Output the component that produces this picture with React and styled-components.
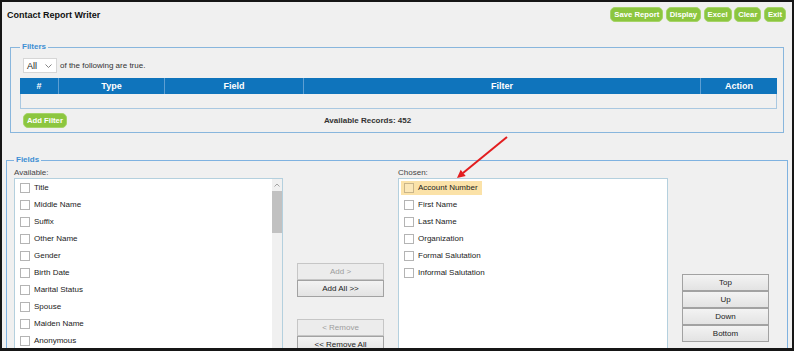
import React from "react";
import styled, { createGlobalStyle } from "styled-components";

const Global = createGlobalStyle`
  html, body { margin: 0; padding: 0; background: #ffffff; }
  body { font-family: "Liberation Sans", Arial, sans-serif; color: #222; }
`;

const Frame = styled.div`
  position: relative;
  width: 794px;
  height: 351px;
  box-sizing: border-box;
  border: 2px solid #161616;
  border-bottom-width: 3px;
  background: #f0f0f0;
  overflow: hidden;
`;

const Header = styled.div`
  display: flex;
  align-items: center;
  justify-content: space-between;
  height: 25px;
  padding: 0 6px 0 5px;
`;

const Title = styled.div`
  font-size: 9px;
  font-weight: bold;
  color: #111;
`;

const ActionBar = styled.div`
  display: flex;
  gap: 2.5px;
`;

const GreenButton = styled.button`
  height: 15px;
  padding: 0 3px;
  margin: ${(p) => p.$margin || "0"};
  border: 1px solid #a6d468;
  border-radius: 5px;
  background: #8cc63f;
  color: #fff;
  font-family: "Liberation Sans", Arial, sans-serif;
  font-weight: bold;
  font-size: 7.7px;
  line-height: 13px;
  white-space: nowrap;
`;

const Fieldset = styled.fieldset`
  margin: ${(p) => p.$margin};
  padding: ${(p) => p.$padding};
  border: 1px solid ${(p) => p.$border};
  min-width: 0;
`;

const Legend = styled.legend`
  padding: 0 2px;
  margin: 0;
  font-size: 8px;
  line-height: 10px;
  font-weight: bold;
  color: #3d8ed3;
`;

const MatchRow = styled.div`
  display: flex;
  align-items: center;
  height: 15px;
  margin-left: 3px;
  gap: 3px;
  font-size: 8px;
  color: #333;
`;

const SelectBox = styled.div`
  display: flex;
  align-items: center;
  justify-content: space-between;
  box-sizing: border-box;
  width: 34px;
  height: 15px;
  padding: 0 4px 0 3px;
  background: #fff;
  border: 1px solid #d6d6d6;
  font-size: 9px;
  color: #222;
`;

const Table = styled.div`
  margin-top: 5px;
`;

const HeadRow = styled.div`
  display: grid;
  grid-template-columns: 38px 106px 139px 397px 1fr;
  height: 16px;
  background: #0f74bc;
`;

const HeadCell = styled.div`
  display: flex;
  align-items: center;
  justify-content: center;
  color: #fff;
  font-size: 9px;
  font-weight: bold;
  border-left: ${(p) => (p.$first ? "none" : "1px solid #5d9fd3")};
`;

const BodyRow = styled.div`
  height: 15px;
  box-sizing: border-box;
  border: 1px solid #a9c8e1;
  border-top: none;
`;

const FilterFooter = styled.div`
  display: flex;
  align-items: center;
  margin-top: 4px;
  height: 15px;
`;

const Records = styled.div`
  margin-left: 257px;
  font-size: 8px;
  font-weight: bold;
  color: #333;
`;

const FieldsGrid = styled.div`
  display: grid;
  grid-template-columns: 269px 87px 270px 87px;
  column-gap: 14px;
  align-items: start;
`;

const ListColumn = styled.div`
  display: flex;
  flex-direction: column;
`;

const ListLabel = styled.div`
  height: 10px;
  line-height: 10px;
  font-size: 8px;
  color: #444;
`;

const ListBox = styled.div`
  display: flex;
  height: 190px;
  box-sizing: border-box;
  background: #fff;
  border: 1px solid #b4d0de;
`;

const List = styled.div`
  flex: 1;
  padding-left: 2px;
`;

const Row = styled.div`
  display: flex;
  align-items: center;
  height: 17px;
`;

const Item = styled.div`
  display: inline-flex;
  align-items: center;
  gap: 4px;
  height: 14px;
  padding: 0 4px 0 3px;
  background: ${(p) => (p.$selected ? "#fbe2a8" : "transparent")};
  font-size: 8px;
  color: #222;
`;

const Check = styled.span`
  width: 8px;
  height: 8px;
  border: 1px solid ${(p) => (p.$selected ? "#c9b58a" : "#b4b4b4")};
  background: ${(p) => (p.$selected ? "#fbe7b8" : "#fff")};
`;

const Scrollbar = styled.div`
  display: flex;
  flex-direction: column;
  width: 10px;
  background: #f0f0f0;
`;

const ScrollArrow = styled.div`
  display: flex;
  align-items: center;
  justify-content: center;
  height: 12px;
`;

const Thumb = styled.div`
  height: 42px;
  background: #c1c1c1;
`;

const ButtonStack = styled.div`
  display: flex;
  flex-direction: column;
  padding-top: ${(p) => p.$top}px;
`;

const GrayButton = styled.button`
  height: 17px;
  margin-top: ${(p) => p.$gap || 0}px;
  padding: 0;
  box-sizing: border-box;
  border: 1px solid ${(p) => (p.disabled ? "#c6c6c6" : "#a2a2a2")};
  background: ${(p) =>
    p.disabled ? "#ececec" : "linear-gradient(#f3f3f3, #e3e3e3)"};
  color: ${(p) => (p.disabled ? "#9d9d9d" : "#222")};
  font-family: "Liberation Sans", Arial, sans-serif;
  font-size: 8px;
  line-height: 15px;
`;

const ArrowMark = styled.svg`
  position: absolute;
  left: 438px;
  top: 123px;
  width: 80px;
  height: 65px;
  overflow: visible;
`;

const available = [
  "Title",
  "Middle Name",
  "Suffix",
  "Other Name",
  "Gender",
  "Birth Date",
  "Marital Status",
  "Spouse",
  "Maiden Name",
  "Anonymous",
];

const chosen = [
  "Account Number",
  "First Name",
  "Last Name",
  "Organization",
  "Formal Salutation",
  "Informal Salutation",
];

const columns = ["#", "Type", "Field", "Filter", "Action"];

export default function App() {
  return (
    <>
      <Global />
      <Frame>
        <Header>
          <Title>Contact Report Writer</Title>
          <ActionBar>
            {["Save Report", "Display", "Excel", "Clear", "Exit"].map((b) => (
              <GreenButton key={b}>{b}</GreenButton>
            ))}
          </ActionBar>
        </Header>

        <Fieldset $margin="15px 8px 0 8px" $padding="6px 6px 4px 9px" $border="#88b6dd">
          <Legend>Filters</Legend>
          <MatchRow>
            <SelectBox>
              <span>All</span>
              <svg width="7" height="4" viewBox="0 0 7 4">
                <path d="M0.5 0.5 L3.5 3.5 L6.5 0.5" fill="none" stroke="#777" strokeWidth="0.9" />
              </svg>
            </SelectBox>
            <span>of the following are true.</span>
          </MatchRow>
          <Table>
            <HeadRow>
              {columns.map((c, i) => (
                <HeadCell key={c} $first={i === 0}>
                  {c}
                </HeadCell>
              ))}
            </HeadRow>
            <BodyRow />
          </Table>
          <FilterFooter>
            <GreenButton $margin="0 0 0 3px">Add Filter</GreenButton>
            <Records>Available Records: 452</Records>
          </FilterFooter>
        </Fieldset>

        <Fieldset $margin="22px 4px 0 4px" $padding="3px 0 0 7px" $border="#7fb2e0">
          <Legend>Fields</Legend>
          <FieldsGrid>
            <ListColumn>
              <ListLabel>Available:</ListLabel>
              <ListBox>
                <List>
                  {available.map((a) => (
                    <Row key={a}>
                      <Item>
                        <Check />
                        {a}
                      </Item>
                    </Row>
                  ))}
                </List>
                <Scrollbar>
                  <ScrollArrow>
                    <svg width="6" height="4" viewBox="0 0 6 4">
                      <path d="M0.5 3.5 L3 1 L5.5 3.5" fill="none" stroke="#a3a3a3" strokeWidth="1" />
                    </svg>
                  </ScrollArrow>
                  <Thumb />
                </Scrollbar>
              </ListBox>
            </ListColumn>

            <ButtonStack $top={95}>
              <GrayButton disabled>Add &gt;</GrayButton>
              <GrayButton>Add All &gt;&gt;</GrayButton>
              <GrayButton disabled $gap={22}>
                &lt; Remove
              </GrayButton>
              <GrayButton>&lt;&lt; Remove All</GrayButton>
            </ButtonStack>

            <ListColumn>
              <ListLabel>Chosen:</ListLabel>
              <ListBox>
                <List>
                  {chosen.map((c, i) => (
                    <Row key={c}>
                      <Item $selected={i === 0}>
                        <Check $selected={i === 0} />
                        {c}
                      </Item>
                    </Row>
                  ))}
                </List>
              </ListBox>
            </ListColumn>

            <ButtonStack $top={106}>
              <GrayButton>Top</GrayButton>
              <GrayButton>Up</GrayButton>
              <GrayButton>Down</GrayButton>
              <GrayButton>Bottom</GrayButton>
            </ButtonStack>
          </FieldsGrid>
        </Fieldset>

        <ArrowMark viewBox="0 0 80 65">
          <line x1="67" y1="12" x2="23" y2="48" stroke="#e31d1f" strokeWidth="2" />
          <polygon points="17,53 25.7,51 20.7,44.8" fill="#e31d1f" />
        </ArrowMark>
      </Frame>
    </>
  );
}
